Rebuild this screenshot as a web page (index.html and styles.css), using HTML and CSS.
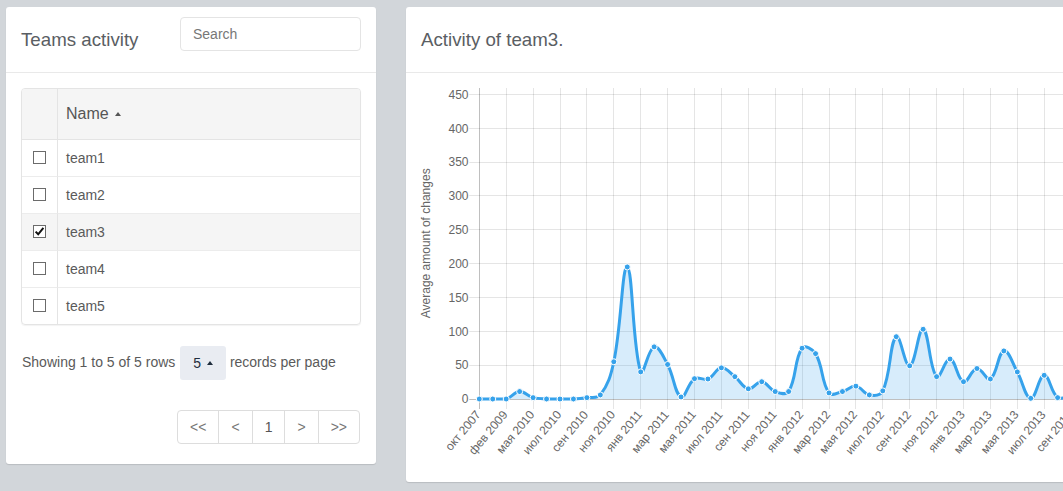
FILE: index.html
```html
<!DOCTYPE html>
<html lang="ru">
<head>
<meta charset="utf-8">
<title>Teams activity</title>
<link rel="stylesheet" href="styles.css">
</head>
<body>
<div class="page">
  <section class="card card-teams">
    <header class="card-header">
      <h3 class="card-title">Teams activity</h3>
      <input class="search" type="text" placeholder="Search">
    </header>
    <div class="card-body">
      <div class="table-wrap">
        <table class="teams">
          <thead>
            <tr><th class="col-check"></th><th class="col-name">Name<span class="sort-up"></span></th></tr>
          </thead>
          <tbody>
            <tr><td class="col-check"><span class="checkbox"></span></td><td>team1</td></tr>
            <tr><td class="col-check"><span class="checkbox"></span></td><td>team2</td></tr>
            <tr class="selected"><td class="col-check"><span class="checkbox"><svg class="tick-mark" viewBox="0 0 11 11" width="11" height="11"><path d="M1.6 5.6 L4.2 8.3 L9.4 1.8" fill="none" stroke="#111" stroke-width="2"/></svg></span></td><td>team3</td></tr>
            <tr><td class="col-check"><span class="checkbox"></span></td><td>team4</td></tr>
            <tr><td class="col-check"><span class="checkbox"></span></td><td>team5</td></tr>
          </tbody>
        </table>
      </div>
      <div class="pagination-detail">Showing 1 to 5 of 5 rows <span class="page-size">5<span class="caret-up"></span></span> records per page</div>
      <ul class="pagination">
        <li>&lt;&lt;</li>
        <li>&lt;</li>
        <li class="current">1</li>
        <li>&gt;</li>
        <li>&gt;&gt;</li>
      </ul>
    </div>
  </section>
  <section class="card card-activity">
    <header class="card-header">
      <h3 class="card-title">Activity of team3.</h3>
    </header>
    <div class="chart-body">
      <svg id="chart" class="chart" width="700" height="409" viewBox="0 0 700 409"></svg>
    </div>
  </section>
</div>
<script src="activity-chart.js"></script>
</body>
</html>
```

FILE: styles.css
```css
* { box-sizing: border-box; }
html, body { margin: 0; padding: 0; overflow: hidden; height: 100%; }
body {
  background: #d2d6da;
  font-family: "Liberation Sans", Arial, Helvetica, sans-serif;
  font-size: 14px;
  line-height: 20px;
  color: #555;
}
.page {
  display: flex;
  align-items: flex-start;
  gap: 30px;
  padding: 7px 0 0 6px;
  width: max-content;
}
.card {
  background: #fff;
  border-radius: 3px;
  box-shadow: 0 1px 1px rgba(0, 0, 0, 0.12);
}
.card-teams { width: 370px; }
.card-activity { width: 700px; }
.card-header {
  height: 66px;
  border-bottom: 1px solid #e9e9e9;
  display: flex;
  justify-content: space-between;
  align-items: flex-start;
  padding: 0 15px;
}
.card-title {
  margin: 0;
  align-self: center;
  font-size: 18.72px;
  line-height: 22px;
  font-weight: normal;
  color: #5a5e63;
}
.search {
  margin-top: 10px;
  width: 181px;
  height: 34px;
  border: 1px solid #e4e4e4;
  border-radius: 4px;
  padding: 6px 12px;
  font: 14px "Liberation Sans", Arial, sans-serif;
  color: #555;
  outline: none;
}
.search::placeholder { color: #777; }
.card-body { padding: 15px 15px 20px; }
.table-wrap {
  border: 1px solid #e4e4e4;
  border-radius: 4px;
  overflow: hidden;
  box-shadow: 0 1px 1px rgba(0, 0, 0, 0.05);
}
.teams {
  width: 100%;
  border-collapse: separate;
  border-spacing: 0;
}
.teams th {
  height: 51px;
  background: #f5f5f5;
  border-bottom: 1px solid #e4e4e4;
  font-size: 16px;
  font-weight: normal;
  text-align: left;
  padding: 0 8px;
  color: #555;
}
.teams td {
  height: 37px;
  padding: 0 8px;
  border-bottom: 1px solid #ececec;
  color: #5a5a5a;
}
.teams tbody tr:last-child td { height: 36px; border-bottom: 0; }
.teams .col-check {
  width: 36px;
  padding: 0;
  border-right: 1px solid #e4e4e4;
  text-align: center;
}
.teams tr.selected td { background: #f5f5f5; }
.sort-up {
  display: inline-block;
  margin-left: 6px;
  vertical-align: 3px;
  border-left: 3.5px solid transparent;
  border-right: 3.5px solid transparent;
  border-bottom: 4px solid #555;
}
.checkbox {
  display: inline-flex;
  align-items: center;
  justify-content: center;
  width: 13px;
  height: 13px;
  border: 1px solid #6b6b6b;
  background: #fff;
  vertical-align: middle;
  margin-bottom: 4px;
}
.tick-mark { display: block; }
.pagination-detail {
  margin-top: 21px;
  line-height: 32px;
  height: 34px;
  padding-left: 1px;
  color: #5a5a5a;
}
.page-size {
  display: inline-block;
  vertical-align: top;
  height: 34px;
  line-height: 34px;
  margin-left: 1px;
  padding: 0 13px 0 13px;
  background: #e9ecf2;
  border-radius: 3px;
  color: #1f2d3d;
}
.caret-up {
  display: inline-block;
  margin-left: 6px;
  vertical-align: 3px;
  border-left: 3.5px solid transparent;
  border-right: 3.5px solid transparent;
  border-bottom: 4px solid #1f2d3d;
}
.pagination {
  display: flex;
  justify-content: flex-end;
  list-style: none;
  margin: 30px 1px 0 0;
  padding: 0;
}
.pagination li {
  padding: 6px 12px;
  line-height: 20px;
  border: 1px solid #ddd;
  margin-left: -1px;
  color: #777;
  background: #fff;
}
.pagination li.current { color: #555; }
.pagination li:first-child { border-radius: 4px 0 0 4px; }
.pagination li:last-child { border-radius: 0 4px 4px 0; }
.chart-body { height: 409px; overflow: hidden; }
.chart { display: block; }
.chart .tick-label, .chart .axis-title {
  font-family: "Liberation Sans", Arial, sans-serif;
  font-size: 12px;
  fill: #666;
}
```

FILE: activity-chart.js
```js
(function () {
  var NS = 'http://www.w3.org/2000/svg';
  var svg = document.getElementById('chart');
  var values = [0,0,0,11,2,0,0,0,2,6,55,195,40,77,51,3,30,29.5,46,33,15,25.5,11,11,75,67,9,11,19,6,12,92,49,103,33,59,25.5,45,29.5,71,40,1,35,2,5,20,10,30];
  var labels = ['окт 2007','фев 2009','мая 2010','июл 2010','сен 2010','ноя 2010','янв 2011','мар 2011','мая 2011','июл 2011','сен 2011','ноя 2011','янв 2012','мар 2012','мая 2012','июл 2012','сен 2012','ноя 2012','янв 2013','мар 2013','мая 2013','июл 2013','сен 2013','ноя 2013'];
  var left = 73.3, right = 700, top = 21.3, bottom = 326, gridTop = 15, step = 13.45, max = 450;
  var color = '#36a2eb';

  function el(name, attrs, text) {
    var e = document.createElementNS(NS, name);
    for (var k in attrs) e.setAttribute(k, attrs[k]);
    if (text != null) e.textContent = text;
    svg.appendChild(e);
    return e;
  }
  function yOf(v) { return bottom - v * (bottom - top) / max; }
  function crisp(p) { return Math.floor(p) + 0.5; }

  // horizontal grid + y labels
  for (var v = 0; v <= max; v += 50) {
    var y = crisp(yOf(v));
    el('line', { x1: left - 10, x2: right, y1: y, y2: y, stroke: v === 0 ? 'rgba(0,0,0,0.25)' : 'rgba(0,0,0,0.1)', 'stroke-width': 1 });
    el('text', { x: 62.5, y: (yOf(v) + 4.3).toFixed(1), 'text-anchor': 'end', 'class': 'tick-label' }, String(v));
  }
  // vertical grid + x labels
  for (var k = 0; k < labels.length; k++) {
    var gx = left + k * 2 * step;
    var x = crisp(gx);
    el('line', { x1: x, x2: x, y1: gridTop, y2: bottom + 10, stroke: k === 0 ? 'rgba(0,0,0,0.25)' : 'rgba(0,0,0,0.1)', 'stroke-width': 1 });
    var ax = (gx + 2).toFixed(1), ay = 342;
    el('text', { x: ax, y: ay, 'text-anchor': 'end', 'class': 'tick-label', transform: 'rotate(-50 ' + ax + ' ' + ay + ')' }, labels[k]);
  }
  // axis title
  el('text', { 'class': 'axis-title', 'text-anchor': 'middle', transform: 'translate(24.3 170.3) rotate(-90)' }, 'Average amount of changes');

  // points
  var pts = values.map(function (val, i) { return { x: left + i * step, y: yOf(val) }; });
  var t = 0.4;
  pts.forEach(function (p, i) {
    var prev = pts[i - 1] || p, next = pts[i + 1] || p;
    var d01 = Math.hypot(p.x - prev.x, p.y - prev.y);
    var d12 = Math.hypot(next.x - p.x, next.y - p.y);
    var s01 = d01 / (d01 + d12), s12 = d12 / (d01 + d12);
    if (isNaN(s01)) s01 = 0;
    if (isNaN(s12)) s12 = 0;
    var fa = t * s01, fb = t * s12;
    p.cpx0 = p.x - fa * (next.x - prev.x);
    p.cpy0 = p.y - fa * (next.y - prev.y);
    p.cpx1 = p.x + fb * (next.x - prev.x);
    p.cpy1 = p.y + fb * (next.y - prev.y);
    p.cpy0 = Math.min(bottom, Math.max(top, p.cpy0));
    p.cpy1 = Math.min(bottom, Math.max(top, p.cpy1));
    p.cpx0 = Math.max(left, p.cpx0);
  });
  var d = 'M' + pts[0].x.toFixed(2) + ' ' + pts[0].y.toFixed(2);
  for (var i = 1; i < pts.length; i++) {
    var a = pts[i - 1], b = pts[i];
    d += ' C' + a.cpx1.toFixed(2) + ' ' + a.cpy1.toFixed(2) + ' ' + b.cpx0.toFixed(2) + ' ' + b.cpy0.toFixed(2) + ' ' + b.x.toFixed(2) + ' ' + b.y.toFixed(2);
  }
  var last = pts[pts.length - 1];
  el('path', { d: d + ' L' + last.x.toFixed(2) + ' ' + bottom + ' L' + pts[0].x.toFixed(2) + ' ' + bottom + ' Z', fill: 'rgba(54,162,235,0.2)', stroke: 'none' });
  el('path', { d: d, fill: 'none', stroke: color, 'stroke-width': 3 });
  pts.forEach(function (p) {
    el('circle', { cx: p.x.toFixed(2), cy: p.y.toFixed(2), r: 3, fill: color, stroke: '#fff', 'stroke-width': 1 });
  });
})();
```
